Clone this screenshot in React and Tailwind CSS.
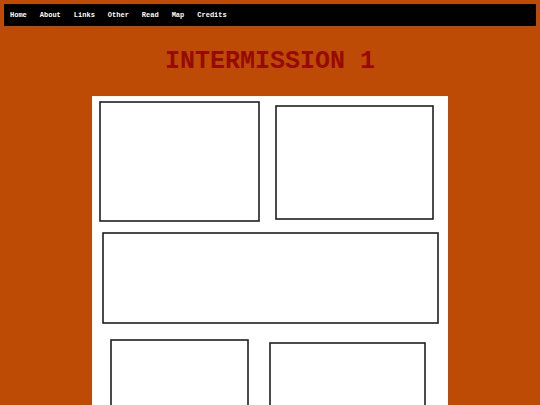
import React from 'react';

const NAV = ['Home', 'About', 'Links', 'Other', 'Read', 'Map', 'Credits'];

// panel outlines of the comic page, in page coordinates
const PANELS = [
    { x: 8, y: 6, w: 159, h: 119 },
    { x: 184, y: 10, w: 157, h: 113 },
    { x: 11, y: 137, w: 335, h: 90 },
    { x: 19, y: 244, w: 137, h: 130 },
    { x: 178, y: 247, w: 155, h: 130 },
];

const App = () => {
    return (
        <div className="min-h-screen bg-[#bd4a05] p-1 overflow-hidden" style={{ height: 405 }}>
            <nav className="h-[22px] bg-black flex items-center px-[6px] gap-[13px] font-['Liberation_Mono',monospace] text-[7px] font-bold text-white">
                {NAV.map((item) => (
                    <a key={item} href="#" className="leading-none">{item}</a>
                ))}
            </nav>

            <h1 className="h-[70px] flex items-center justify-center font-['Liberation_Mono',monospace] text-[25px] font-bold text-[#960a00] leading-none">
                INTERMISSION 1
            </h1>

            <div className="w-[356px] mx-auto bg-white">
                <svg width="356" height="320" viewBox="0 0 356 320" className="block">
                    {PANELS.map((p, i) => (
                        <rect key={i} x={p.x} y={p.y} width={p.w} height={p.h} fill="white" stroke="#1f1f1f" strokeWidth="1.6" />
                    ))}
                </svg>
            </div>
        </div>
    );
};

export default App;
